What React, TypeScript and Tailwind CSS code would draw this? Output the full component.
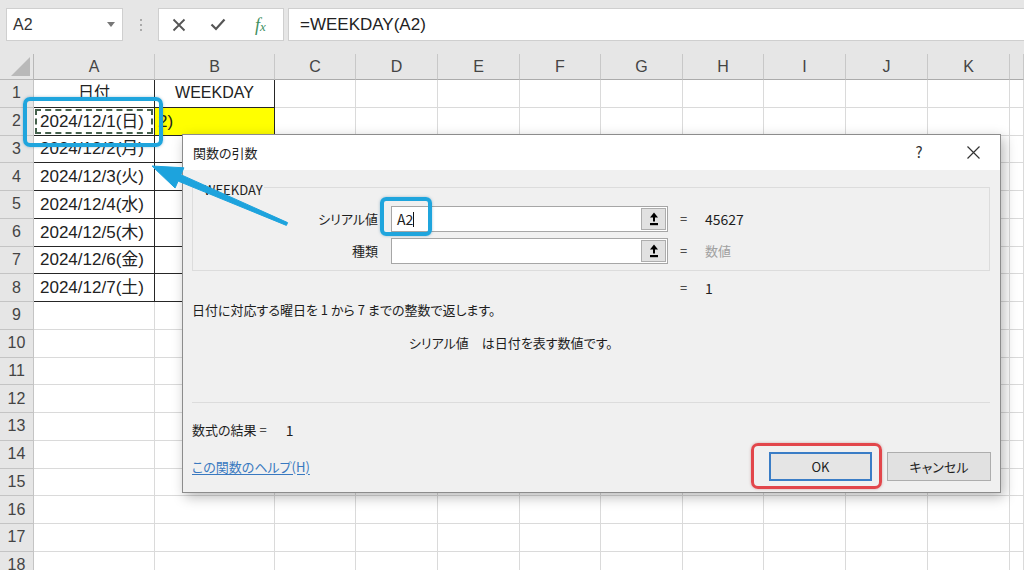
import React from 'react';

const COLS = ['A', 'B', 'C', 'D', 'E', 'F', 'G', 'H', 'I', 'J', 'K', ''];
const DAYS = ['日', '月', '火', '水', '木', '金', '土'];
const ROWS = Array.from({ length: 18 }, (_, i) => i + 1);

function Toolbar() {
  return (
    <div className="h-[54px] bg-[#e6e6e6] flex items-start pt-[8px]">
      <div className="ml-[6px] w-[117px] h-[33px] bg-white border border-[#cfcfcf] flex items-center justify-between pl-[6px] pr-[7px]">
        <span className="text-[16px] text-[#333]">A2</span>
        <svg width="8" height="5" viewBox="0 0 8 5">
          <path d="M0 0h8L4 5z" fill="#777" />
        </svg>
      </div>
      <div className="w-[35px] h-[33px] flex flex-col items-center justify-center gap-[3px]">
        <span className="w-[2px] h-[2px] bg-[#aaa]" />
        <span className="w-[2px] h-[2px] bg-[#aaa]" />
        <span className="w-[2px] h-[2px] bg-[#aaa]" />
      </div>
      <div className="w-[126px] h-[33px] bg-white border border-[#cfcfcf] flex items-center">
        <div className="w-[40px] flex justify-center">
          <svg width="14" height="14" viewBox="0 0 14 14">
            <path d="M1.5 1.5l11 11M12.5 1.5l-11 11" stroke="#555" strokeWidth="1.8" />
          </svg>
        </div>
        <div className="w-[40px] flex justify-center">
          <svg width="16" height="13" viewBox="0 0 16 13">
            <path d="M1.5 6.5l4.5 4.5L14.5 1.5" stroke="#555" strokeWidth="2.2" fill="none" />
          </svg>
        </div>
        <div className="w-[46px] flex justify-center">
          <span className="font-['Liberation_Serif',serif] italic text-[18px] text-[#3f8f5f] leading-none">
            f<span className="text-[13px]">x</span>
          </span>
        </div>
      </div>
      <div className="ml-[4px] flex-1 h-[33px] bg-white border-y border-l border-[#cfcfcf] flex items-center pl-[11px] text-[17px] text-[#222]">
        =WEEKDAY(A2)
      </div>
    </div>
  );
}

function Sheet() {
  return (
    <div className="grid grid-cols-[34px_121px_120px_81px_82px_82px_81px_82px_81px_82px_82px_82px_1fr] grid-rows-[26px_repeat(18,27.75px)]">
      <div className="bg-[#e6e6e6] border-r border-b border-[#b8b8b8] relative">
        <svg className="absolute right-[3px] bottom-[3px]" width="19" height="19" viewBox="0 0 19 19">
          <path d="M19 0V19H0z" fill="#b9b9b9" />
        </svg>
      </div>
      {COLS.map((c, i) => (
        <div
          key={i}
          className="bg-[#e6e6e6] border-r border-b border-r-[#c8c8c8] border-b-[#ababab] flex items-center justify-center text-[16px] text-[#444] leading-none"
        >
          {c}
        </div>
      ))}
      {ROWS.map((r) => (
        <React.Fragment key={r}>
          <div className="bg-[#e6e6e6] border-r border-b border-[#c4c4c4] flex items-center justify-center text-[16px] text-[#444] leading-none">
            {r}
          </div>
          {COLS.map((_, c) => {
            const inTable = r <= 8 && c <= 1;
            const line = inTable
              ? 'border-r border-b border-[#262626]'
              : 'border-r border-b border-[#dadada]';
            const fill = r === 2 && c === 1 ? 'bg-[#ffff00]' : 'bg-white';
            let content: React.ReactNode = null;
            let align = 'justify-start';
            if (r === 1 && c === 0) {
              content = <span className="text-[16px]">日付</span>;
              align = 'justify-center';
            } else if (r === 1 && c === 1) {
              content = <span className="text-[16px]">WEEKDAY</span>;
              align = 'justify-center';
            } else if (r >= 2 && r <= 8 && c === 0) {
              content = (
                <span className="pl-[6px] text-[17px]">
                  2024/12/{r - 1}({DAYS[r - 2]})
                </span>
              );
            } else if (r === 2 && c === 1) {
              content = <span className="pl-[3px] text-[17px]">2)</span>;
            }
            return (
              <div
                key={c}
                className={`${line} ${fill} ${align} relative flex items-center text-[#222] leading-none whitespace-nowrap overflow-hidden`}
              >
                {content}
                {r === 2 && c === 0 && (
                  <div className="absolute inset-[1px] border-2 border-dashed border-[#44604c]" />
                )}
              </div>
            );
          })}
        </React.Fragment>
      ))}
    </div>
  );
}

function RefButton() {
  return (
    <div className="ml-auto mr-[1px] w-[25px] h-[22px] bg-[#e1e1e1] border border-[#adadad] flex items-center justify-center">
      <svg width="10" height="14" viewBox="0 0 10 14">
        <path d="M5 0.5L1 5.5h3v4h2v-4h3z" fill="#000" />
        <rect x="1" y="11" width="8" height="2.2" fill="#000" />
      </svg>
    </div>
  );
}

function ArgDialog() {
  return (
    <div className="absolute left-[182px] top-[134px] w-[819px] h-[359px] bg-[#f0f0f0] border border-[#8c8c8c] shadow-[3px_4px_12px_rgba(0,0,0,0.28)] flex flex-col font-['Noto_Sans_CJK_JP','Noto_Sans',sans-serif] [font-feature-settings:'palt'] text-[13px] text-[#1e1e1e]">
      <div className="h-[35px] bg-white flex items-center pl-[10px]">
        <span>関数の引数</span>
        <span className="ml-auto w-[46px] text-center text-[15px] text-[#333]">?</span>
        <div className="ml-[8px] mr-[4px] w-[46px] flex justify-center">
          <svg width="13" height="13" viewBox="0 0 13 13">
            <path d="M0.5 0.5l12 12M12.5 0.5l-12 12" stroke="#333" strokeWidth="1.2" />
          </svg>
        </div>
      </div>
      <div className="flex-1 flex flex-col pl-[9px] pr-[10px]">
        <div className="mt-[17px] border border-[#dcdcdc] pb-[6px]">
          <div className="-mt-[6px] ml-[10px] px-[1px] w-fit bg-[#f0f0f0] leading-[16px]">WEEKDAY</div>
          <div className="mt-[8px] flex items-center h-[26px]">
            <div className="w-[185px] text-right">シリアル値</div>
            <div className="ml-[13px] w-[277px] h-[26px] bg-white border border-[#a6a6a6] flex items-center">
              <span className="pl-[5px] text-[14px]">A2</span>
              <span className="w-px h-[15px] bg-[#111]" />
              <RefButton />
            </div>
            <span className="ml-[12px] w-[25px]">=</span>
            <span className="text-[14px]">45627</span>
          </div>
          <div className="mt-[6px] flex items-center h-[26px]">
            <div className="w-[185px] text-right">種類</div>
            <div className="ml-[13px] w-[277px] h-[26px] bg-white border border-[#a6a6a6] flex items-center">
              <RefButton />
            </div>
            <span className="ml-[12px] w-[25px]">=</span>
            <span className="text-[#a0a0a0]">数値</span>
          </div>
        </div>
        <div className="mt-[8px] h-[18px] flex items-center pl-[488px]">
          <span className="w-[25px]">=</span>
          <span className="text-[14px]">1</span>
        </div>
        <div className="mt-[4px] h-[18px] flex items-center">
          日付に対応する曜日を 1 から 7 までの整数で返します。
        </div>
        <div className="mt-[15px] h-[18px] flex items-center pl-[217px]">
          シリアル値　は日付を表す数値です。
        </div>
        <div className="mt-[50px] h-px bg-[#dcdcdc]" />
        <div className="mt-[18px] h-[18px] flex items-center">
          数式の結果 =<span className="ml-[19px] text-[14px]">1</span>
        </div>
        <div className="mt-[13px] h-[29px] flex items-center">
          <span className="text-[#3979c0] underline underline-offset-2">この関数のヘルプ(H)</span>
          <button className="ml-auto w-[103px] h-[29px] bg-[#e5e5e5] border-2 border-[#3a7dc6] text-[13px]">
            OK
          </button>
          <button className="ml-[15px] mr-[-1px] w-[104px] h-[29px] bg-[#e1e1e1] border border-[#adadad] text-[13px]">
            キャンセル
          </button>
        </div>
      </div>
    </div>
  );
}

function Callouts() {
  return (
    <>
      <div className="absolute left-[23px] top-[97px] w-[140px] h-[50px] border-4 border-[#1fa5dd] rounded-[7px] shadow-[0_0_3px_rgba(0,90,140,0.35)]" />
      <div className="absolute left-[380px] top-[197px] w-[52px] h-[39px] border-4 border-[#1fa5dd] rounded-[6px] shadow-[0_0_3px_rgba(0,90,140,0.35)]" />
      <div className="absolute left-[751px] top-[443px] w-[131px] h-[46px] border-[3px] border-[#e2464b] rounded-[7px] shadow-[0_0_3px_rgba(140,0,0,0.3)]" />
      <svg className="absolute left-0 top-0 pointer-events-none" width="1024" height="570" viewBox="0 0 1024 570">
        <polygon
          points="287.6,222.6 180.9,174.7 183.9,167.8 152,166 175.1,188 178.1,181.1 286.4,225.4"
          fill="#1da3dd"
          stroke="#1da3dd"
          strokeWidth="1"
          strokeLinejoin="round"
        />
      </svg>
    </>
  );
}

export default function App() {
  return (
    <div className="relative w-[1024px] h-[570px] overflow-hidden bg-white font-['Liberation_Sans','Noto_Sans_CJK_JP',sans-serif]">
      <Toolbar />
      <Sheet />
      <ArgDialog />
      <Callouts />
    </div>
  );
}
